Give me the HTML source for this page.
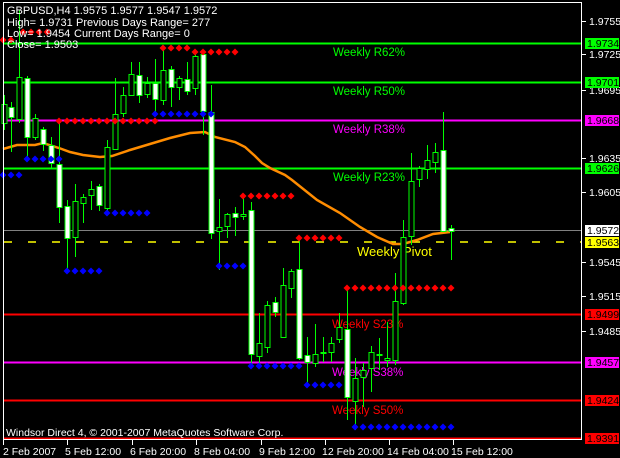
<!DOCTYPE html>
<html><head><meta charset="utf-8"><style>
html,body{margin:0;padding:0;background:#000;}
svg{display:block;font-family:"Liberation Sans","DejaVu Sans",sans-serif;}
</style></head><body>
<svg width="620" height="458" viewBox="0 0 620 458" xmlns="http://www.w3.org/2000/svg">
<rect width="620" height="458" fill="#000"/>
<defs>
<path id="dm" d="M0,-3.5 L3.5,0 L0,3.5 L-3.5,0Z"/>
</defs>
<g stroke-width="2">
<line x1="4" x2="581" y1="43.5" y2="43.5" stroke="#00ff00"/>
<line x1="4" x2="581" y1="82.5" y2="82.5" stroke="#00ff00"/>
<line x1="4" x2="581" y1="120.5" y2="120.5" stroke="#ff00ff"/>
<line x1="4" x2="581" y1="168.5" y2="168.5" stroke="#00ff00"/>
<line x1="4" x2="581" y1="314.5" y2="314.5" stroke="#ff0000"/>
<line x1="4" x2="581" y1="362.5" y2="362.5" stroke="#ff00ff"/>
<line x1="4" x2="581" y1="400.5" y2="400.5" stroke="#ff0000"/>
<line x1="4" x2="581" y1="438.5" y2="438.5" stroke="#ff0000"/>
</g>
<line x1="4" x2="581" y1="230.5" y2="230.5" stroke="#808080" stroke-width="1"/>
<line x1="4" x2="581" y1="242" y2="242" stroke="#ffff00" stroke-width="1.5" stroke-dasharray="8,16"/>
<g font-size="11.5">
<text x="333" y="56" fill="#00ff00">Weekly R62%</text>
<text x="333" y="95" fill="#00ff00">Weekly R50%</text>
<text x="333" y="133" fill="#ff00ff">Weekly R38%</text>
<text x="333" y="181" fill="#00ff00">Weekly R23%</text>
<text x="357" y="256" fill="#ffff00" font-size="13">Weekly Pivot</text>
<text x="332" y="328" fill="#ff0000">Weekly S23%</text>
<text x="332" y="376" fill="#ff00ff">Weekly S38%</text>
<text x="332" y="414" fill="#ff0000">Weekly S50%</text>
</g>
<polyline fill="none" stroke="#ff8c00" stroke-width="2.5" points="3,149 17,145 35,145 43,143 59,148 70,152 83,155 100,157 112,156 130,150 150,144 170,138 190,133 205,132 215,137 235,142 245,147 255,156 262,163 270,168 285,175 292,180 317,200 340,213 360,227 377,237 393,244 403,244 417,240 433,234 450,232"/>
<g id="candles" stroke="#00ff00" stroke-width="1"></g>
<g id="dots"></g>
<rect x="3.5" y="2.5" width="578" height="437" fill="none" stroke="#fff" stroke-width="1"/>
<g fill="#fff" font-size="11">
<text x="7" y="14">GBPUSD,H4  1.9575 1.9577 1.9547 1.9572</text>
<text x="7" y="26">High= 1.9731</text><text x="76" y="26">Previous Days Range= 277</text>
<text x="7" y="37">Low= 1.9454</text><text x="74" y="37">Current Days Range= 0</text>
<text x="7" y="48">Close= 1.9503</text>
<text x="6" y="436" font-size="10.5">Windsor Direct 4, © 2001-2007 MetaQuotes Software Corp.</text>
</g>
<g fill="#fff" font-size="10.5" id="ax"></g>
<g fill="#fff" font-size="10.5">
<text x="3" y="455">2 Feb 2007</text>
<text x="65" y="455">5 Feb 12:00</text>
<text x="130" y="455">6 Feb 20:00</text>
<text x="194" y="455">8 Feb 04:00</text>
<text x="259" y="455">9 Feb 12:00</text>
<text x="322" y="455">12 Feb 20:00</text>
<text x="387" y="455">14 Feb 04:00</text>
<text x="451" y="455">15 Feb 12:00</text>
</g>
<g stroke="#fff"><line x1="3.5" x2="3.5" y1="440" y2="445"/><line x1="67.5" x2="67.5" y1="440" y2="445"/><line x1="132.5" x2="132.5" y1="440" y2="445"/><line x1="196.5" x2="196.5" y1="440" y2="445"/><line x1="261.5" x2="261.5" y1="440" y2="445"/><line x1="325.5" x2="325.5" y1="440" y2="445"/><line x1="389.5" x2="389.5" y1="440" y2="445"/><line x1="453.5" x2="453.5" y1="440" y2="445"/></g>
<script>
var NS="http://www.w3.org/2000/svg";
function el(p,t,a,txt){var e=document.createElementNS(NS,t);for(var k in a)e.setAttribute(k,a[k]);if(txt)e.textContent=txt;p.appendChild(e);return e;}
var C=[[4,104,123,95,130,0],[11,107,117,102,152,1],[19,77,119,10,123,0],[27,78,137,76,160,1],[35,118,137,114,140,0],[43,129,144,127,151,1],[51,145,163,137,168,1],[59,164,207,123,223,1],[67,206,238,200,273,1],[75,201,237,184,257,0],[83,197,203,194,223,0],[91,189,195,181,210,0],[99,186,205,184,211,1],[107,147,208,140,213,0],[115,114,149,78,149,0],[123,95,113,87,117,0],[131,74,95,62,96,0],[139,75,95,62,103,1],[147,83,94,77,98,0],[155,83,99,59,114,1],[163,70,100,47,105,0],[171,69,87,66,107,1],[179,78,87,76,100,0],[187,79,91,62,95,1],[195,56,88,53,95,0],[203,54,111,53,135,1],[211,112,233,85,239,1],[219,227,231,199,270,0],[227,214,226,213,238,0],[235,213,217,207,236,1],[243,214,216,197,220,0],[251,210,354,202,365,1],[259,343,356,313,363,0],[267,305,347,301,353,0],[275,302,312,297,317,1],[283,285,337,268,337,0],[291,271,288,269,298,0],[299,269,358,240,360,1],[307,355,362,337,387,1],[315,354,363,324,367,0],[323,352,353,337,362,0],[331,343,352,337,362,0],[339,327,339,313,343,0],[347,329,397,288,420,1],[355,378,401,358,430,0],[363,370,377,363,407,0],[371,352,368,346,392,0],[379,354,355,338,370,0],[387,358,360,322,367,0],[395,301,360,273,365,0],[403,237,303,220,305,0],[411,181,236,153,245,0],[419,168,179,166,187,0],[427,160,169,145,179,0],[435,152,162,143,173,0],[443,150,231,112,232,1],[451,228,231,225,260,1]];
var g=document.getElementById("candles");
C.forEach(function(c){el(g,"line",{x1:c[0]+.5,x2:c[0]+.5,y1:c[3],y2:c[4]});
el(g,"rect",{x:c[0]-2,y:c[1]+.5,width:5,height:Math.max(1,c[2]-c[1]),fill:c[5]?"#fff":"#000"});});
var D=[[48,163,187,"#f00"],[52,195,235,"#f00"],[32,23,50,"#f00"],[40,3,11,"#f00"],[121,59,155,"#f00"],[114,155,211,"#00f"],[159,27,59,"#00f"],[175,3,19,"#00f"],[196,243,291,"#f00"],[213,107,147,"#00f"],[271,67,99,"#00f"],[266,219,243,"#00f"],[238,299,339,"#f00"],[288,347,451,"#f00"],[366,251,299,"#00f"],[385,307,339,"#00f"],[427,355,451,"#00f"]];
var gd=document.getElementById("dots");
D.forEach(function(d){for(var x=d[1];x<=d[2];x+=8)el(gd,"use",{href:"#dm",x:x,y:d[0],fill:d[3]});});
var ax=document.getElementById("ax");
var T=[["1.9755",21],["1.9725",54],["1.9695",90],["1.9635",158],["1.9605",192],["1.9545",262],["1.9515",296],["1.9485",331]];
T.forEach(function(t){el(ax,"line",{x1:582,x2:586,y1:t[1]+.5,y2:t[1]+.5,stroke:"#fff"});el(ax,"text",{x:589,y:t[1]+4},t[0]);});
var L=[["1.9734",43,"#00ff00"],["1.9701",82,"#00ff00"],["1.9668",120,"#ff00ff"],["1.9626",168,"#00ff00"],["1.9572",230,"#ffffff"],["1.9563",242,"#ffff00"],["1.9499",314,"#ff0000"],["1.9457",362,"#ff00ff"],["1.9424",400,"#ff0000"],["1.9391",438,"#ff0000"]];
L.forEach(function(l){el(ax,"rect",{x:585,y:l[1]-5,width:34,height:11,fill:l[2]});el(ax,"text",{x:587,y:l[1]+4,fill:"#000"},l[0]);});
</script>
</svg>
</body></html>
